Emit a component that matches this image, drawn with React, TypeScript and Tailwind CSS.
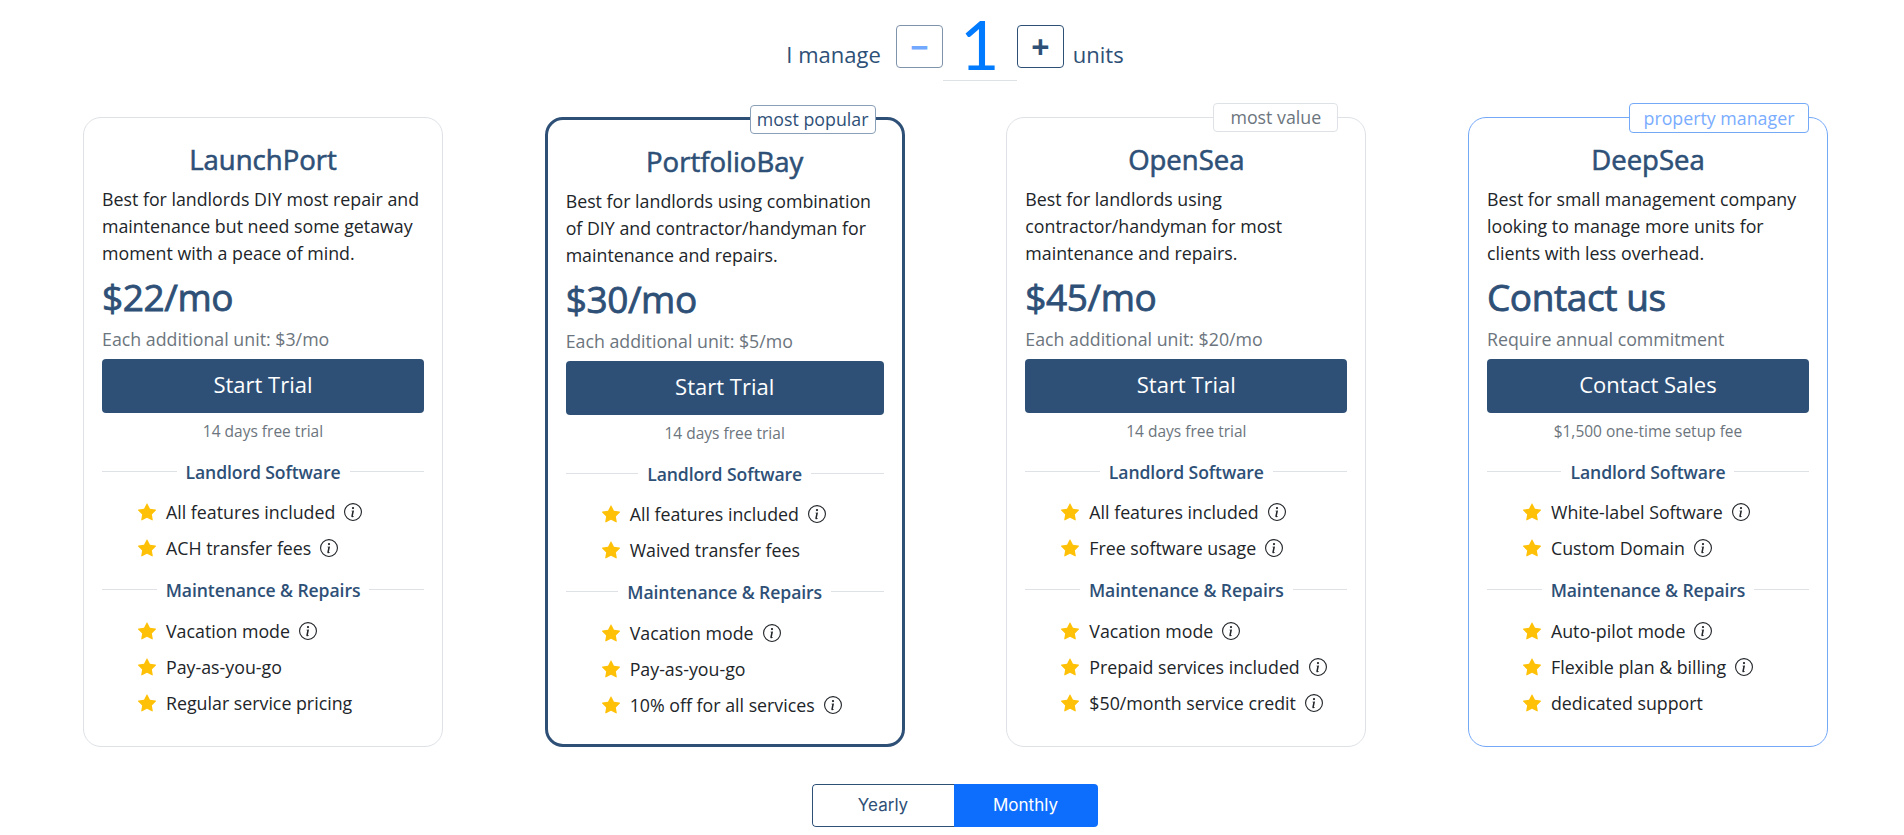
import React from 'react';
import { BsStarFill, BsInfoCircle } from 'react-icons/bs';

interface Feature {
    label: string;
    info?: boolean;
}

interface Plan {
    name: string;
    desc: string[];
    price: string;
    note: string;
    cta: string;
    fine: string;
    software: Feature[];
    maintenance: Feature[];
    badge?: string;
    cardClass: string;
    badgeClass?: string;
}

const plans: Plan[] = [
    {
        name: 'LaunchPort',
        desc: ['Best for landlords DIY most repair and', 'maintenance but need some getaway', 'moment with a peace of mind.'],
        price: '$22/mo',
        note: 'Each additional unit: $3/mo',
        cta: 'Start Trial',
        fine: '14 days free trial',
        software: [{ label: 'All features included', info: true }, { label: 'ACH transfer fees', info: true }],
        maintenance: [{ label: 'Vacation mode', info: true }, { label: 'Pay-as-you-go' }, { label: 'Regular service pricing' }],
        cardClass: 'border border-[#dee2e6]',
    },
    {
        name: 'PortfolioBay',
        desc: ['Best for landlords using combination', 'of DIY and contractor/handyman for', 'maintenance and repairs.'],
        price: '$30/mo',
        note: 'Each additional unit: $5/mo',
        cta: 'Start Trial',
        fine: '14 days free trial',
        software: [{ label: 'All features included', info: true }, { label: 'Waived transfer fees' }],
        maintenance: [{ label: 'Vacation mode', info: true }, { label: 'Pay-as-you-go' }, { label: '10% off for all services', info: true }],
        badge: 'most popular',
        cardClass: 'border-[3px] border-[#2e5077]',
        badgeClass: 'right-[26px] top-[-15px] w-[126px] h-[29px] border border-[#8a9fb8] text-[#2e5077]',
    },
    {
        name: 'OpenSea',
        desc: ['Best for landlords using', 'contractor/handyman for most', 'maintenance and repairs.'],
        price: '$45/mo',
        note: 'Each additional unit: $20/mo',
        cta: 'Start Trial',
        fine: '14 days free trial',
        software: [{ label: 'All features included', info: true }, { label: 'Free software usage', info: true }],
        maintenance: [{ label: 'Vacation mode', info: true }, { label: 'Prepaid services included', info: true }, { label: '$50/month service credit', info: true }],
        badge: 'most value',
        cardClass: 'border border-[#dee2e6]',
        badgeClass: 'right-[27px] top-[-15px] w-[125px] h-[29px] border border-[#dee2e6] text-[#6c757d]',
    },
    {
        name: 'DeepSea',
        desc: ['Best for small management company', 'looking to manage more units for', 'clients with less overhead.'],
        price: 'Contact us',
        note: 'Require annual commitment',
        cta: 'Contact Sales',
        fine: '$1,500 one-time setup fee',
        software: [{ label: 'White-label Software', info: true }, { label: 'Custom Domain', info: true }],
        maintenance: [{ label: 'Auto-pilot mode', info: true }, { label: 'Flexible plan & billing', info: true }, { label: 'dedicated support' }],
        badge: 'property manager',
        cardClass: 'border border-[#74a9f8]',
        badgeClass: 'right-[18px] top-[-15px] w-[180px] h-[30px] border border-[#74a9f8] text-[#7aacff]',
    },
];

const SectionTitle = ({ title, className }: { title: string; className: string }) => (
    <div className={`flex items-center gap-[9px] h-[24px] ${className}`}>
        <div className="flex-1 h-px mb-[2px] bg-[#dee2e6]" />
        <span className="text-[17.6px] font-semibold text-[#2e5077] tracking-[-0.1px]">{title}</span>
        <div className="flex-1 h-px mb-[2px] bg-[#dee2e6]" />
    </div>
);

const FeatureList = ({ items, className }: { items: Feature[]; className: string }) => (
    <ul className={`pl-[36px] ${className}`}>
        {items.map((item) => (
            <li key={item.label} className="flex items-center h-[36px] text-[17.8px] text-[#212529]">
                <BsStarFill className="text-[#ffc107] mr-[10px] shrink-0" size={18} />
                <span className="whitespace-nowrap">{item.label}</span>
                {item.info && <BsInfoCircle className="ml-[9px] shrink-0" size={18} />}
            </li>
        ))}
    </ul>
);

const PlanCard = ({ plan }: { plan: Plan }) => (
    <div className={`relative w-[360px] h-[630px] shrink-0 rounded-[18px] bg-white px-[18px] pt-[18px] ${plan.cardClass}`}>
        {plan.badge && (
            <div className={`absolute flex items-center justify-center rounded-[4px] bg-white text-[17.8px] ${plan.badgeClass}`}>
                {plan.badge}
            </div>
        )}
        <h2 className="h-[50px] leading-[48px] text-center text-[27.5px] [-webkit-text-stroke:0.6px_#2e5077] text-[#2e5077]">{plan.name}</h2>
        <div className="text-[17.8px] leading-[27px] text-[#212529] whitespace-nowrap">
            {plan.desc.map((line) => (
                <div key={line}>{line}</div>
            ))}
        </div>
        <div className="mt-[8px] h-[44px] leading-[44px] text-[37px] [-webkit-text-stroke:0.8px_#2e5077] tracking-[-0.4px] text-[#2e5077] whitespace-nowrap">{plan.price}</div>
        <div className="mt-[7px] h-[27px] leading-[27px] text-[17.8px] text-[#6c757d]">{plan.note}</div>
        <button className="mt-[6px] w-full h-[54px] pb-[3px] rounded-[4px] bg-[#2e5077] text-white text-[22px]">{plan.cta}</button>
        <div className="mt-[6px] h-[24px] leading-[24px] text-center text-[15.5px] text-[#6c757d]">{plan.fine}</div>
        <SectionTitle title="Landlord Software" className="mt-[17px]" />
        <FeatureList items={plan.software} className="mt-[10px]" />
        <SectionTitle title="Maintenance & Repairs" className="mt-[12px]" />
        <FeatureList items={plan.maintenance} className="mt-[11px]" />
    </div>
);

export default function App() {
    return (
        <div className="min-h-[835px] bg-white font-['Open_Sans',sans-serif] overflow-hidden">
            <div className="flex justify-center items-start pt-[10px] pl-[6px] text-[#2e5077]">
                <span className="mt-[29px] h-[30px] leading-[30px] text-[22px]">I manage</span>
                <button className="ml-[15px] mt-[15px] w-[47px] h-[43px] rounded-[4px] border border-[#7f93ab] text-[#73a8ff] text-[32px] font-bold leading-none">−</button>
                <div className="w-[74px] h-[71px] border-b border-[#dee2e6] text-center text-[#007bff] text-[68px] leading-[68px] font-['Lato',sans-serif]">1</div>
                <button className="mt-[15px] w-[47px] h-[43px] rounded-[4px] border border-[#2e5077] text-[#2e5077] text-[32px] font-bold leading-none">+</button>
                <span className="ml-[9px] mt-[29px] h-[30px] leading-[30px] text-[22px]">units</span>
            </div>
            <div className="flex mt-[36px] pl-[83px] gap-[101.67px]">
                {plans.map((plan) => (
                    <PlanCard key={plan.name} plan={plan} />
                ))}
            </div>
            <div className="flex justify-center mt-[37px] pl-[5px]">
                <div className="flex w-[286px] h-[43px] rounded-[4px] overflow-hidden text-[17px] font-['Inter',sans-serif]">
                    <button className="w-[142px] border border-r-0 border-[#2e5077] rounded-l-[4px] text-[#2e5077]">Yearly</button>
                    <button className="w-[144px] bg-[#0d6efd] text-white">Monthly</button>
                </div>
            </div>
        </div>
    );
}
